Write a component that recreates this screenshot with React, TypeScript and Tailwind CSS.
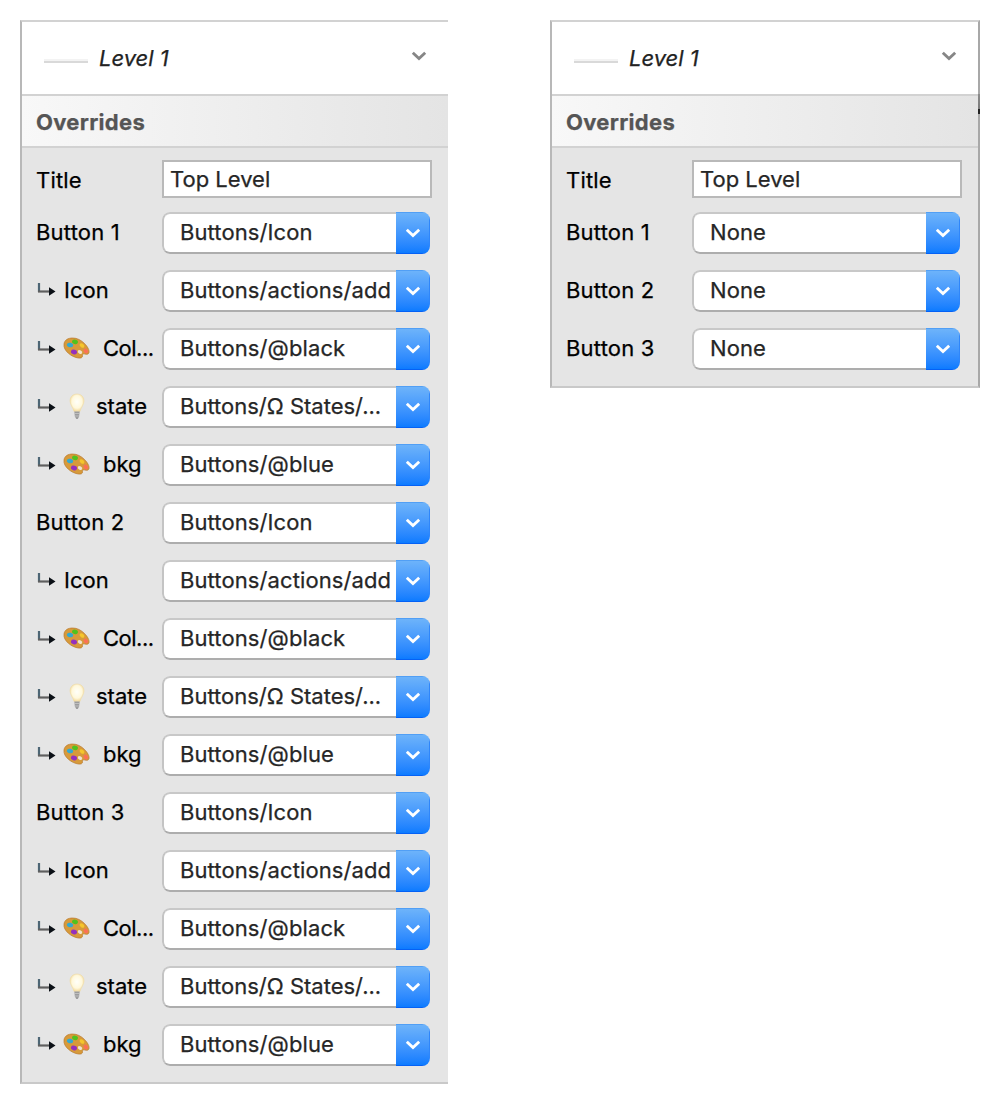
import clsx from 'clsx';

type Icon = 'palette' | 'bulb';

type Override = {
  label: string;
  value: string;
  nested?: boolean;
  icon?: Icon;
};

const buttonOverrides = (n: number): Override[] => [
  { label: `Button ${n}`, value: 'Buttons/Icon' },
  { label: 'Icon', value: 'Buttons/actions/add', nested: true },
  { label: 'Col...', value: 'Buttons/@black', nested: true, icon: 'palette' },
  { label: 'state', value: 'Buttons/Ω States/...', nested: true, icon: 'bulb' },
  { label: 'bkg', value: 'Buttons/@blue', nested: true, icon: 'palette' },
];

const expanded: Override[] = [1, 2, 3].flatMap(buttonOverrides);

const collapsed: Override[] = [1, 2, 3].map((n) => ({ label: `Button ${n}`, value: 'None' }));

function NestedArrow() {
  return (
    <svg width="20" height="16" viewBox="0 0 20 16" fill="none" className="-mt-px shrink-0">
      <path d="M3 1v9" stroke="#4d6675" strokeWidth="2.200" />
      <path d="M2 9.500h12" stroke="#5f5f5f" strokeWidth="2.200" />
      <path d="M13 5.200l6.500 4.300-6.500 4.300z" fill="#0b1016" />
    </svg>
  );
}

function Palette() {
  return (
    <svg width="27" height="22" viewBox="0 0 27 22" className="shrink-0">
      <path
        d="M1 7C1.500 3 5 1 9.500 1c4.500 0 8.500 2 12 5.500 3 3 5 6.500 4.500 9-.4 2-2.500 2-4 1.500-1.800-.6-3 .2-2.600 2 .3 1.600-1.600 2.400-4 2C9 20.200 0 14 1 7z"
        fill="#d79a3a"
        stroke="#b9792b"
        strokeWidth="0.700"
      />
      <ellipse cx="17" cy="15" rx="2.400" ry="1.700" fill="#efe3cf" transform="rotate(30 17 15)" />
      <ellipse cx="7" cy="8" rx="3.200" ry="2.200" fill="#35a9cf" transform="rotate(15 7 8)" />
      <ellipse cx="12" cy="4.800" rx="3" ry="2.200" fill="#4fc21f" transform="rotate(15 12 4.800)" />
      <ellipse cx="19" cy="8.500" rx="2.700" ry="1.800" fill="#f5c62c" transform="rotate(40 19 8.500)" />
      <ellipse cx="22.800" cy="14" rx="2.600" ry="2" fill="#fb7057" transform="rotate(45 22.800 14)" />
      <ellipse cx="11" cy="15" rx="3.100" ry="2.300" fill="#9431bd" transform="rotate(20 11 15)" />
    </svg>
  );
}

function Bulb() {
  return (
    <svg width="16" height="27" viewBox="0 0 16 27" className="shrink-0">
      <defs>
        <radialGradient id="glow" cx="0.5" cy="0.45" r="0.6">
          <stop offset="0" stopColor="#fffffa" />
          <stop offset="0.6" stopColor="#fff8dc" />
          <stop offset="1" stopColor="#f0d085" />
        </radialGradient>
      </defs>
      <path
        d="M8 1C3.900 1 1 3.800 1 8c0 3.600 3 6.500 4 10.500h6C12 14.500 15 11.600 15 8c0-4.200-2.900-7-7-7z"
        fill="url(#glow)"
        stroke="#efdba7"
        strokeWidth="0.600"
      />
      <path d="M5.300 18.500h5.400l-.6 5L8.800 26H7.200l-1.300-2.500z" fill="#9c9c9c" />
      <path d="M5.500 20.500h5M5.800 23h4.400" stroke="#cfcfcf" strokeWidth="0.700" />
    </svg>
  );
}

function Chevron({ className }: { className: string }) {
  return (
    <svg width="16" height="12" viewBox="0 0 16 12" fill="none" className={className}>
      <path d="M1.800 2.800L8 8.500l6.200-5.700" stroke="currentColor" strokeWidth="2.900" />
    </svg>
  );
}

function RowLabel({ label, nested, icon }: Override) {
  return (
    <div className="flex h-10 w-[126px] shrink-0 items-center text-black">
      {nested && <NestedArrow />}
      {icon === 'palette' && (
        <span className="ml-[7px] mr-[13px]">
          <Palette />
        </span>
      )}
      {icon === 'bulb' && (
        <span className="ml-[13px] mr-[11px]">
          <Bulb />
        </span>
      )}
      <span
        className={clsx(
          'whitespace-nowrap',
          nested ? !icon && 'ml-2' : 'tracking-[0.2px]',
          label.endsWith('...') && 'tracking-[-0.5px]'
        )}
      >
        {label}
      </span>
    </div>
  );
}

function Select({ value }: { value: string }) {
  return (
    <div className="flex h-[42px] w-[268px] overflow-hidden rounded-lg">
      <div className="flex min-w-0 flex-1 rounded-l-lg border-y-2 border-l-2 border-t-[#c8c8c8] border-b-[#adadad] border-l-[#c4c4c4] bg-white pl-4 text-[#262626]">
        <span className={clsx('h-9 whitespace-nowrap leading-9', !value.endsWith('...') && 'tracking-[0.1px]')}>{value}</span>
      </div>
      <button className="flex w-[34px] shrink-0 items-center justify-center border-y border-r border-t-[#519ff5] border-r-[#2f86fa] border-b-[#0561f5] bg-linear-to-b from-[#6db3fa] to-[#0b7bff]">
        <Chevron className="text-white" />
      </button>
    </div>
  );
}

function Inspector({ overrides, className }: { overrides: Override[]; className: string }) {
  return (
    <div className={clsx('border-l-2 border-y-2 border-l-[#b8b8b8] border-t-[#d2d2d2] border-b-[#c9c9c9] bg-[#e5e5e5]', className)}>
      <div className="flex h-[74px] items-center border-b-2 border-[#d2d2d2] bg-white pl-[22px] pr-[21px]">
        <div className="mt-[5px] h-[4px] w-11 border-b-2 border-[#d9d9d9] bg-[#f3f3f3]" />
        <span className="ml-[11px] flex-1 italic text-[#222]">Level 1</span>
        <Chevron className="-mt-[5px] text-[#868686]" />
      </div>
      <div className="flex h-[52px] items-center border-b-2 border-[#d2d2d2] bg-linear-to-r from-[#f8f8f8] to-[#e4e4e4] pl-[14px] pt-[2px] font-bold tracking-[0.3px] text-[#555]">
        Overrides
      </div>
      <div className="pb-4 pl-[14px] pt-3">
        <div className="mb-[14px] flex h-[38px]">
          <RowLabel label="Title" value="" />
          <div className="h-[38px] w-[270px] border-2 border-[#b9b9b9] bg-white pl-[6px] leading-[34px] text-[#262626]">
            Top Level
          </div>
        </div>
        <div className="flex flex-col gap-4">
          {overrides.map((o, i) => (
            <div key={i} className="flex h-[42px]">
              <RowLabel {...o} />
              <Select value={o.value} />
            </div>
          ))}
        </div>
      </div>
    </div>
  );
}

export default function App() {
  return (
    <div className="flex h-[1104px] w-[1000px] items-start gap-[102px] bg-white p-5 font-['Inter','Noto_Sans',sans-serif] text-[22px] leading-[30px] [-webkit-text-stroke:0.25px]">
      <Inspector overrides={expanded} className="w-[428px]" />
      <div className="relative">
        <Inspector overrides={collapsed} className="w-[430px] border-r-2 border-r-[#a8a8a8]" />
        {/* edge of the window behind the panel */}
        <div className="absolute right-0 top-[74px] h-5 w-[2px] bg-linear-to-b from-[#8a8a8a] to-[#777]" />
        <div className="absolute right-0 top-[89px] h-[5px] w-[2px] bg-[#222]" />
      </div>
    </div>
  );
}
